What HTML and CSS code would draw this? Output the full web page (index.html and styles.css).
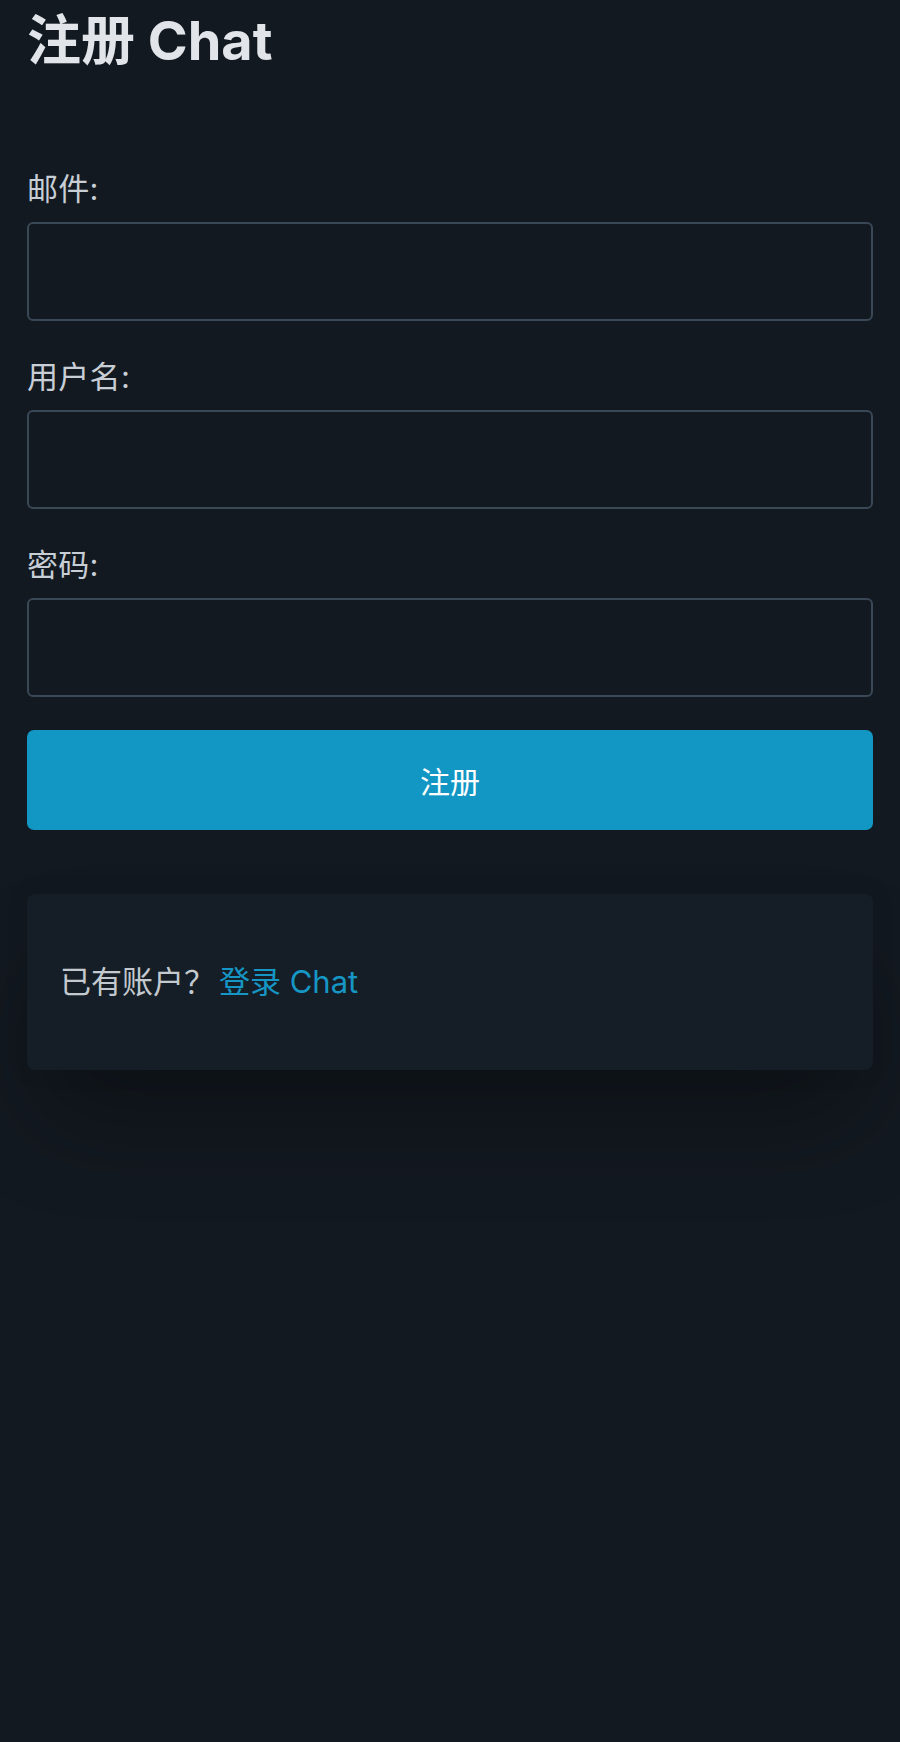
FILE: index.html
```html
<!DOCTYPE html>
<html lang="zh">
<head>
<meta charset="utf-8">
<title>注册 Chat</title>
<link rel="stylesheet" href="styles.css">
</head>
<body>
<main class="page">
  <h1 class="title">注册 Chat</h1>
  <form class="form">
    <div class="field">
      <label class="label" for="email">邮件:</label>
      <input class="input" id="email" type="email">
    </div>
    <div class="field">
      <label class="label" for="username">用户名:</label>
      <input class="input" id="username" type="text">
    </div>
    <div class="field">
      <label class="label" for="password">密码:</label>
      <input class="input" id="password" type="password">
    </div>
    <button class="submit" type="button">注册</button>
  </form>
  <div class="card">
    <p class="card-text">已有账户？<a class="link" href="#">登录 Chat</a></p>
  </div>
</main>
</body>
</html>
```
FILE: styles.css
```css
html {
  background: #131920;
}

body {
  margin: 0;
  padding: 0;
  min-height: 1742px;
  font-family: "Inter", "Noto Sans CJK SC", sans-serif;
  color: #cbd2d9;
}

.page {
  padding: 11px 27px 300px;
}

.title {
  margin: 0;
  font-size: 54px;
  line-height: 60px;
  font-weight: 700;
  color: #e1e5e9;
}

.form {
  margin-top: 97px;
  display: flex;
  flex-direction: column;
}

.field + .field {
  margin-top: 35px;
}

.label {
  display: block;
  font-size: 31px;
  line-height: 42px;
  margin-bottom: 12px;
  color: #c7ced5;
  letter-spacing: 0.3px;
}

.input {
  display: block;
  width: 100%;
  height: 99px;
  box-sizing: border-box;
  border: 2px solid #3a4756;
  border-radius: 6px;
  background: #131920;
  color: #e1e5e9;
  font: inherit;
  font-size: 30px;
  padding: 0 20px;
  outline: none;
}

.submit {
  margin-top: 33px;
  height: 100px;
  border: none;
  border-radius: 7px;
  background: #1296c3;
  color: #ffffff;
  font-family: "Inter", "Noto Sans CJK SC", sans-serif;
  font-size: 30px;
  font-weight: 400;
  cursor: pointer;
}

.card {
  margin-top: 64px;
  height: 176px;
  box-sizing: border-box;
  padding: 0 33px;
  display: flex;
  align-items: center;
  background: #151e26;
  border-radius: 8px;
  box-shadow: 0 0 24px rgba(0, 0, 0, 0.08), 0 60px 100px -14px rgba(0, 0, 0, 0.3);
}

.card-text {
  margin: 0;
  font-size: 31px;
  line-height: 46px;
  color: #c3c9cf;
}

.link {
  margin-left: 4px;
  color: #1696c4;
  text-decoration: none;
}
```
